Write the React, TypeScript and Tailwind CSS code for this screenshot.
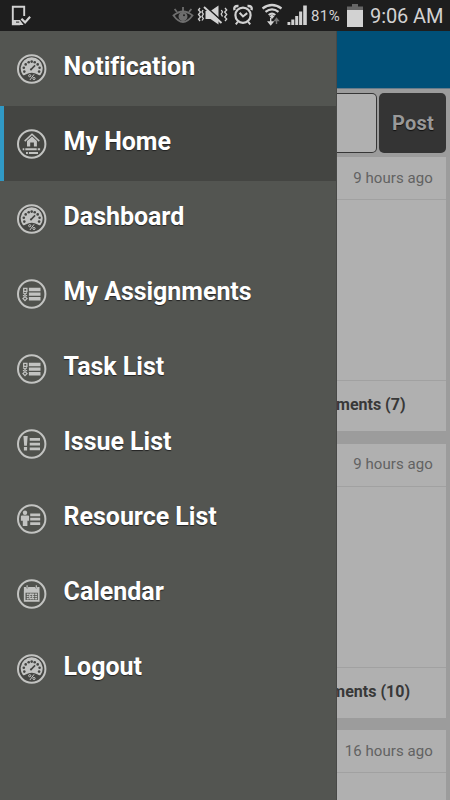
import React from 'react';

type IconName = 'gauge' | 'home' | 'tasks' | 'issue' | 'resource' | 'calendar';

const menu: { label: string; icon: IconName; active?: boolean }[] = [
  { label: 'Notification', icon: 'gauge' },
  { label: 'My Home', icon: 'home', active: true },
  { label: 'Dashboard', icon: 'gauge' },
  { label: 'My Assignments', icon: 'tasks' },
  { label: 'Task List', icon: 'tasks' },
  { label: 'Issue List', icon: 'issue' },
  { label: 'Resource List', icon: 'resource' },
  { label: 'Calendar', icon: 'calendar' },
  { label: 'Logout', icon: 'gauge' },
];

const dots = [
  [7.6, 17.6], [7.1, 13.8], [9, 10.4], [12, 8.3], [15, 7.6], [18, 8.3], [21, 10.4], [22.9, 13.8], [22.4, 17.6],
];

function Glyph({ name }: { name: IconName }) {
  switch (name) {
    case 'gauge':
      return (
        <>
          <path d="M6.2 20.9A11 11 0 1 1 23.8 20.9Q22.5 21.8 21 20.5Q15 17.2 9 20.5Q7.5 21.8 6.2 20.9Z" fill="#c2c3c1" />
          {dots.map(([x, y]) => (
            <circle key={`${x}-${y}`} cx={x} cy={y} r="1.3" fill="#444542" />
          ))}
          <path d="M14.2 15.6 18.4 11.4" stroke="#444542" strokeWidth="1.5" />
          <circle cx="14.3" cy="15.5" r="1.1" fill="#444542" />
          <g stroke="#c2c3c1" fill="none" strokeWidth="1">
            <circle cx="13" cy="21.7" r="1.1" />
            <circle cx="17.3" cy="24.5" r="1.1" />
            <path d="M17.4 20.3 13.2 26" />
          </g>
        </>
      );
    case 'home':
      return (
        <g fill="#c2c3c1">
          <path d="M8 12.1 15.3 5.3 22.6 12.1" fill="none" stroke="#c2c3c1" strokeWidth="1.5" />
          <path d="M15.3 7.6 20.2 12V17.4H17.2V13.4H13.5V17.4H10.3V12Z" />
          <path d="M6 19.2h1.6v2H6zM8.6 19.2H20v2H8.6zM21 19.2h2.4v2H21zM9.3 22.9h1.9v2H9.3zM12.2 22.9h9.1v2h-9.1z" />
        </g>
      );
    case 'tasks':
      return (
        <g fill="#c2c3c1">
          <path d="M12.2 8.8h11.6v3.4H12.2zM12.2 13.4h11.6v3.3H12.2zM12.2 18h11.6v3.4H12.2z" />
          <g fill="none" stroke="#c2c3c1" strokeWidth="1.3">
            <path d="M7 9.4h3.2v3H7zM6.4 13.6l3.8 3.5M10.2 13.6l-3.8 3.5M8.3 17.6l2 2-2 2-2-2z" />
          </g>
        </g>
      );
    case 'issue':
      return (
        <g fill="#c2c3c1">
          <path d="M6.7 7h4.3l-.8 9.8H7.5zM7.2 18h3.2v3.6H7.2zM13 9h10.3v2.8H13zM13 13.7h10.3v2.7H13zM13 18.4h10.3v2.8H13z" />
        </g>
      );
    case 'resource':
      return (
        <g fill="#c2c3c1">
          <circle cx="8.3" cy="8.8" r="2.2" />
          <path d="M5.3 11.4h6.1q1 0 1 1v4.3h-1.7v5.4H6.1v-5.4H4.2v-4.3q0-1 1.1-1zM13.5 9.4h10v2.8h-10zM13.5 13.8h10v2.8h-10zM13.5 18.2h10V21h-10z" />
        </g>
      );
    case 'calendar':
      return (
        <>
          <path d="M7.2 8h2.1q1.1 3.2 2.3 0h6.8q1.2 3.2 2.3 0h2.1v4H7.2z" fill="#c2c3c1" />
          <path d="M8 12.9h14v8.9H8z" fill="none" stroke="#c2c3c1" strokeWidth="1.7" />
          <path d="M10.4 6.2v3M19.6 6.2v3" stroke="#c2c3c1" strokeWidth="1.2" />
          <path d="M10 15.2h10.4M10 17.5h10.4M10 19.8h10.4" stroke="#c2c3c1" strokeWidth="1.4" strokeDasharray="2.1 .7" />
          <path d="M13 15.2h3v4.2h-3z" fill="none" stroke="#c2c3c1" />
        </>
      );
  }
}

function MenuIcon({ name }: { name: IconName }) {
  return (
    <svg viewBox="0 0 30 30" className="size-[30px] shrink-0">
      <circle cx="14.7" cy="15" r="13.7" fill="#444542" fillOpacity={name === 'gauge' ? 1 : 0.2} stroke="#c2c3c1" strokeWidth="2" />
      <g transform="translate(-0.3 0)">
        <Glyph name={name} />
      </g>
    </svg>
  );
}

function StatusBar() {
  return (
    <header className="h-[31px] shrink-0 bg-[#1e1e1e] flex items-center justify-between text-[#d2d2d2]">
      <svg viewBox="0 0 24 31" className="ml-[9px] w-6 h-[31px]" fill="none" stroke="#d2d2d2">
        <path d="M15.2 16V6.8H3.8v17.4H11" strokeWidth="1.9" />
        <path d="M3 20h8l3.5 5H3z" fill="#d2d2d2" stroke="none" />
        <path d="M7 22.1h3.2" stroke="#222" />
        <path d="m12.4 18.7 3.7 3.7 5-5.6" strokeWidth="2.2" />
      </svg>
      <div className="flex items-center h-full">
        <svg viewBox="172 0 138 31" className="w-[138px] h-[31px]" fill="none" stroke="#d2d2d2">
          <g stroke="#6e6e6e" strokeWidth="1.8">
            <path d="M173.5 15.5q9.5-8 19 0q-9.5 13-19 0Z" />
            <circle cx="183" cy="16.5" r="3.6" fill="#6e6e6e" />
            <path d="M183 11V7M177 12l-2.4-3M189 12l2.4-3" />
          </g>
          <circle cx="184" cy="15.2" r="1" fill="#222" stroke="none" />
          <path d="M205.5 11h5l8-5.5v19l-8-5.5h-5z" fill="#d2d2d2" stroke="none" />
          <path d="m205.3 6.2 17.5 16" stroke="#1e1e1e" strokeWidth="1.8" />
          <path d="m204 7 17.5 16" strokeWidth="1.9" />
          <path d="m200 8-1.5 2 2 2-2 2.5 2 2.5-2 2 1.5 2M203 10l-1 2 1.3 2-1.3 2.5 1.3 2-1.3 2M225 8l1.7 2-2 2 2 2.5-2 2.5 2 2-1.7 2M221.3 10l1.2 2-1.3 2 1.3 2.5" strokeWidth="1.3" />
          <circle cx="243" cy="15.2" r="7.6" strokeWidth="2.2" />
          <path d="m239.6 12.8 3.4 3.7 4.2-3.4M238 21.5l-2.2 2.8M248 21.5l2.2 2.8" strokeWidth="2" />
          <path d="M234.5 10.2q-1.3-4.5 4-4.2M251.5 10.2q1.3-4.5-4-4.2" strokeWidth="2.4" />
          <path d="M262.5 8.5q9.5-7 19 0M265.5 11.8q6.5-5 13 0M268.7 15q3.3-2.6 6.6 0" strokeWidth="2.2" />
          <path d="m269.5 16.2 2.5-1.8 2.5 1.8-2.5 2.8z" fill="#d2d2d2" stroke="none" />
          <path d="M270.7 18v5M268.5 22h4.4l-2.2 2.7z" strokeWidth="1.4" fill="#d2d2d2" />
          <path d="M276.5 24v-4M274.7 20.6l1.8-2.3 1.8 2.3z" stroke="#777" strokeWidth="1.4" />
          <path d="M287.5 22h2.8v3h-2.8zM291.3 19.4h3V25h-3zM295.2 16h3v9h-3zM299.1 11.5h3.1V25h-3.1zM303.2 5.5h3.6V25h-3.6z" fill="#d2d2d2" stroke="none" />
        </svg>
        <span className="w-[31px] ml-px text-[15px] leading-none whitespace-nowrap tracking-[0.4px] translate-y-px">81%</span>
        <svg viewBox="0 0 16 24" className="w-4 h-6 ml-[5px]">
          <path d="M5 0h6v2.5h5V7H0V2.5h5z" fill="#666" />
          <path d="M0 6h16v17H0z" fill="#d2d2d2" />
        </svg>
        <span className="w-[75px] ml-[7px] mr-[5px] text-[20px] leading-none whitespace-nowrap tracking-[-0.1px]">9:06 AM</span>
      </div>
    </header>
  );
}

function FeedCard({ time, comments, commentsInset = '' }: { time: string; comments?: string; commentsInset?: string }) {
  return (
    <article className="h-[274px] mb-[12.5px] mr-1 shrink-0 bg-[#b0b0b0] flex flex-col">
      <div className="h-[43px] shrink-0 border-b border-[#a1a1a1] flex items-center justify-end pr-[13px] text-[15px] text-[#626262] whitespace-nowrap tracking-[0.08px]">
        <span className="-translate-y-[0.5px]">{time}</span>
      </div>
      <div className="flex-1 border-b border-[#a1a1a1]" />
      {comments && (
        <div className={`h-[50px] flex items-center justify-end text-[16px] font-bold text-[#383838] whitespace-nowrap ${commentsInset}`}>
          <span className="-translate-y-px">{comments}</span>
        </div>
      )}
    </article>
  );
}

export default function App() {
  return (
    <div className="w-[450px] h-[800px] overflow-hidden flex flex-col bg-[#9c9c9c] font-['Roboto',sans-serif]">
      <StatusBar />
      <div className="flex-1 min-h-0 flex">
        <nav className="w-[337px] shrink-0 bg-[#535551] border-r border-[#484947]">
          {menu.map((item) => (
            <a
              key={item.label}
              className={`h-[75px] flex items-center gap-[17px] border-l-4 pl-[12.6px] ${item.active ? 'bg-[#444542] border-[#3099c5]' : 'border-transparent'}`}
            >
              <MenuIcon name={item.icon} />
              <span className="text-[25px] leading-[30px] font-bold text-white -translate-y-[2px] whitespace-nowrap tracking-[-0.04px] [text-shadow:0_1px_1px_#222]">
                {item.label}
              </span>
            </a>
          ))}
        </nav>
        <main className="flex-1 min-w-0 overflow-hidden flex flex-col">
          <div className="h-[58px] shrink-0 bg-[#005078] border-b border-[#677b8a]" />
          <div className="h-[68px] shrink-0 pt-1 pb-1 pr-1 flex gap-[2px]">
            <div className="w-[40px] h-[60px] bg-[#b0b0b0] border border-l-0 border-[#363636] rounded-r-[5px]" />
            <button className="w-[67px] shrink-0 h-[60px] rounded-[5px] bg-[#343434] text-[#999] text-[20px] font-bold [text-shadow:0_1px_1px_#111] tracking-[0.2px] pl-px">
              Post
            </button>
          </div>
          <FeedCard time="9 hours ago" comments="Comments (7)" commentsInset="pr-[40.5px]" />
          <FeedCard time="9 hours ago" comments="Comments (10)" commentsInset="pr-[36px]" />
          <FeedCard time="16 hours ago" />
        </main>
      </div>
    </div>
  );
}
